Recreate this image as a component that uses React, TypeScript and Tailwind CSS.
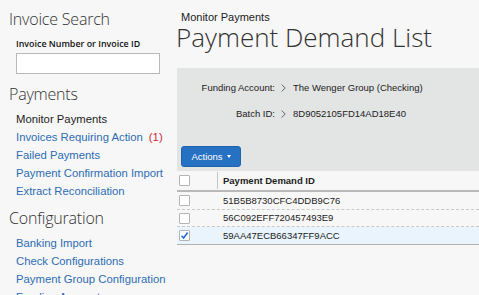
const heading = "font-['Open_Sans',sans-serif] font-light text-[#333] text-[16px] tracking-[-0.2px] leading-[20px]";
const link = "text-[#2d6db4]";

const paymentLinks = ["Invoices Requiring Action", "Failed Payments", "Payment Confirmation Import", "Extract Reconciliation"];
const configLinks = ["Banking Import", "Check Configurations", "Payment Group Configuration", "Funding Accounts"];

const rows = [
  { id: "51B5B8730CFC4DDB9C76", checked: false },
  { id: "56C092EFF720457493E9", checked: false },
  { id: "59AA47ECB66347FF9ACC", checked: true },
];

function Chevron() {
  return (
    <svg width="5" height="8" viewBox="0 0 5 8" className="shrink-0">
      <polyline points="0.7,0.5 4.2,4 0.7,7.5" fill="none" stroke="#555" strokeWidth="0.9" />
    </svg>
  );
}

function Checkbox({ checked }: { checked?: boolean }) {
  return (
    <div className="w-[11px] h-[11px] border border-[#b4b4b4] rounded-[1px] bg-white flex items-center justify-center">
      {checked && (
        <svg width="9" height="9" viewBox="0 0 9 9">
          <polyline points="1.5,4.8 3.6,7 7.6,1.6" fill="none" stroke="#1f6fd6" strokeWidth="1.6" />
        </svg>
      )}
    </div>
  );
}

export default function App() {
  return (
    <div className="w-[479px] h-[295px] overflow-hidden bg-[#f7f7f7] flex font-['Liberation_Sans',Arial,sans-serif]">
      {/* sidebar */}
      <aside className="w-[177px] shrink-0 pl-[9px] pt-[8.5px]">
        <h2 className={heading}>Invoice Search</h2>
        <label className="block mt-[9px] pl-[7px] font-['Open_Sans',sans-serif] font-semibold text-[8.9px] leading-[12px] text-[#111]">
          Invoice Number or Invoice ID
        </label>
        <div className="ml-[7px] mt-[3px] w-[144px] h-[21px] bg-white border border-[#b9b9b9]" />

        <h2 className={heading + " mt-[10.5px]"}>Payments</h2>
        <ul className="mt-[5.75px] pl-[7px] text-[11.3px] leading-[18px]">
          <li className="text-[#222]">Monitor Payments</li>
          {paymentLinks.map((l, i) => (
            <li key={l} className={link}>
              {l}
              {i === 0 && <span className="text-[#d0283a] ml-[6px]">(1)</span>}
            </li>
          ))}
        </ul>

        <h2 className={heading + " mt-[8px]"}>Configuration</h2>
        <ul className="mt-[6.3px] pl-[7px] text-[11.3px] leading-[18px]">
          {configLinks.map((l) => (
            <li key={l} className={link + " whitespace-nowrap"}>{l}</li>
          ))}
        </ul>
      </aside>

      {/* main */}
      <main className="flex-1 min-w-0 pt-[10.7px]">
        <div className="pl-[4px] text-[11px] leading-[12px] text-[#222]">Monitor Payments</div>
        <h1 className="-ml-[1px] font-['Open_Sans',sans-serif] font-light text-[26px] leading-[29px] text-[#333] whitespace-nowrap">
          Payment Demand List
        </h1>

        <section className="mt-[16.2px] bg-[#e3e4e4] pt-[14px] pl-[4px] pb-[4px] text-[9.5px] leading-[12px] text-[#222]">
          <div className="flex flex-col gap-[14.6px]">
            <div className="flex items-center">
              <span className="w-[94px] text-right">Funding Account:</span>
              <span className="ml-[6px] mr-[7px] flex"><Chevron /></span>
              <span>The Wenger Group (Checking)</span>
            </div>
            <div className="flex items-center">
              <span className="w-[94px] text-right">Batch ID:</span>
              <span className="ml-[6px] mr-[7px] flex"><Chevron /></span>
              <span>8D9052105FD14AD18E40</span>
            </div>
          </div>
          <button className="mt-[26px] w-[60px] h-[21px] rounded-[3px] bg-[#2671c1] border border-[#1f63ad] text-white text-[9.5px] flex items-center justify-center gap-[4px]">
            Actions
            <svg width="4" height="3" viewBox="0 0 4 3"><polygon points="0,0 4,0 2,3" fill="#fff" /></svg>
          </button>
        </section>

        <div className="text-[9.5px] text-[#222]">
          <div className="flex h-[21px] border-b-2 border-[#b9b9b9]">
            <div className="w-[41px] border-r border-[#c4c4c4] flex items-center pl-[2px] my-[1px]">
              <Checkbox />
            </div>
            <div className="pl-[5px] flex items-center font-bold">Payment Demand ID</div>
          </div>
          {rows.map((r, i) => (
            <div
              key={r.id}
              className={
                "flex h-[17.5px] items-center " +
                (i === rows.length - 1
                  ? "bg-[#e9f4fd] border-b border-[#b0b0b0]"
                  : "border-b border-dashed border-[#c9c9c9]")
              }
            >
              <div className="w-[41px] pl-[2px] flex items-center">
                <Checkbox checked={r.checked} />
              </div>
              <div className="pl-[5px]">{r.id}</div>
            </div>
          ))}
        </div>
      </main>
    </div>
  );
}
